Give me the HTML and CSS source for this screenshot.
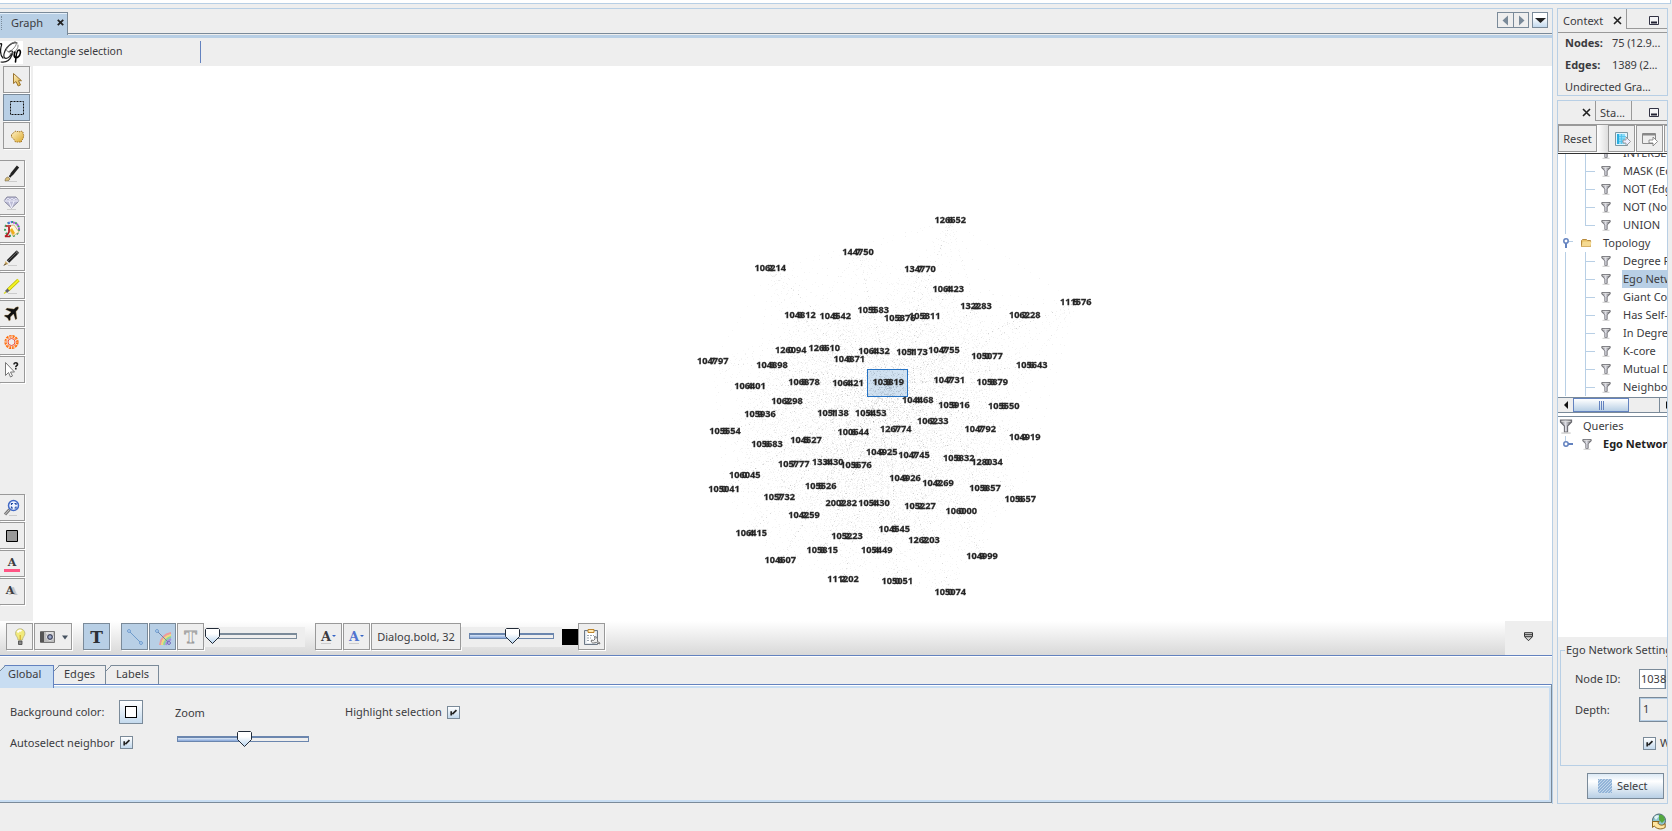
FILE: index.html
```
<!DOCTYPE html>
<html lang="en">
<head>
<meta charset="utf-8">
<title>Graph</title>
<link rel="stylesheet" href="styles.css">
</head>
<body>
<svg class="defs" width="0" height="0">
  <defs>
    <linearGradient id="metal" x1="0" y1="0" x2="0" y2="1"><stop offset="0" stop-color="#fff"/><stop offset=".35" stop-color="#fff"/><stop offset="1" stop-color="#b8d4ee"/></linearGradient>
    <linearGradient id="gold" x1="0" y1="0" x2="1" y2="1"><stop offset="0" stop-color="#fff2c8"/><stop offset="1" stop-color="#dba92c"/></linearGradient>
    <linearGradient id="steel" x1="0" y1="0" x2="1" y2="0"><stop offset="0" stop-color="#666"/><stop offset=".45" stop-color="#e0e0e8"/><stop offset="1" stop-color="#555"/></linearGradient>
    <symbol id="thumb" viewBox="0 0 15 16"><path d="M1.5.5h12l1 1v7l-7 7-7-7v-7z" fill="url(#metal)" stroke="#222b38"/></symbol>
    <symbol id="funnel" viewBox="0 0 10 12"><path d="M.8 1.500h8.400v1.500L6.200 6v4.500H3.800V6L.8 3z" fill="url(#steel)" stroke="#6c6c72" stroke-width=".8"/><path d="M1.500 2.500h7" stroke="#ddd" stroke-width=".8"/><path d="M1.500 11.300h7" stroke="#ccc"/></symbol>
    <symbol id="check" viewBox="0 0 13 13"><path d="M3.800 5v5M5.200 8.500L10 3.700" stroke="#222" stroke-width="2" fill="none"/></symbol>
    <symbol id="cross" viewBox="0 0 9 9"><path d="M1 1l7 7M8 1L1 8" stroke="#222" stroke-width="1.600"/></symbol>
    <symbol id="min" viewBox="0 0 10 9"><path d="M.5.5h9v8h-9z" fill="#f4f4f6" stroke="#334"/><path d="M2 6.500h6" stroke="#223" stroke-width="2"/></symbol>
  </defs>
</svg>
<div class="top-strip"></div>
<div class="workspace">
  <main class="main">
    <header class="tabbar">
      <div class="doc-tab"><i class="grip"></i><span>Graph</span><svg width="7" height="7" viewBox="0 0 9 9"><path d="M1 1l7 7M8 1L1 8" stroke="#222" stroke-width="2.300"/></svg></div>
      <div class="nav">
        <b><svg width="15" height="15"><path d="M10 2.500v10l-5.500-5z" fill="#7a8a99"/></svg></b><b><svg width="15" height="15"><path d="M5 2.500v10l5.500-5z" fill="#7a8a99"/></svg></b><b class="drop"><svg width="15" height="15"><path d="M2 5h11l-5.500 5z" fill="#222"/></svg></b>
      </div>
    </header>
    <div class="options">
      <svg class="logo" width="23" height="23" viewBox="0 0 23 23" fill="none" stroke-linecap="round">
        <path d="M0 3c2-1 2 0 1 3-1 5 0 9 2 11" stroke="#111" stroke-width="1.200"/>
        <path d="M17 2C12 0 5 7 4 13c-1 6 4 6 8-1M9 11c3-2 5-1 3 3-2 5-5 8-11 7" stroke="#222" stroke-width="1.200"/>
        <path d="M15 1C9 2 5 8 7 10s7-2 9-6c1-3-1-4-3-2M18 4c1 3-3 8-8 9" stroke="#777" stroke-width=".9"/>
        <path d="M15 11c-2 5 0 7 3 5s3-7 1-7-3 4-3.500 12" stroke="#000" stroke-width="1.600"/>
      </svg>
      <span>Rectangle selection</span><i class="vrule"></i>
    </div>
    <div class="stage">
      <aside class="tools">
        <div class="group select">
          <b><svg width="20" height="20"><path d="M6.500 3.500v10l2.500-2 2.200 4.500 2.300-1-2-4.300h3z" fill="url(#gold)" stroke="#9a7430"/></svg></b>
          <b class="on"><svg width="20" height="20"><path d="M3.500 3.500h13v13h-13z" fill="none" stroke="#111" stroke-dasharray="2 1"/></svg></b>
          <b><svg width="20" height="20"><path d="M4.500 8.500L7 6.500 8 5l2 1 1-1 2 1 1-1 2 1v2l.8 1-.8 4-1.500 1.500V16H8.500L7 13.500 4.500 11z" fill="url(#gold)" stroke="#a6792d" stroke-dasharray="1.600 .8"/></svg></b>
        </div>
        <div class="group edit">
          <b><svg width="20" height="20"><path d="M4 17c0-3 2-4 3-4l2 2c-1 2-3 2-5 2z" fill="#d8bd78" stroke="#766642" stroke-width=".6"/><path d="M8.500 13L11 10" stroke="#222" stroke-width="2"/><path d="M10.500 10.500L17 2.500" stroke="#222" stroke-width="3"/><path d="M5 17.500h11" stroke="#ccc"/></svg></b>
          <b><svg width="20" height="20"><path d="M6 5h9l3 4-7.500 7L3 9z" fill="#bcbcd6" stroke="#8888a0"/><path d="M3 9h15M8 9l2.500 7L13 9" stroke="#f5f5ff" fill="none" stroke-width=".9"/><path d="M5 8l2-2 2 2 2-2 2 2 2-2 1.500 2" stroke="#f5f5ff" fill="none" stroke-width=".7"/><path d="M6 17.500h9" stroke="#ccc"/></svg></b>
          <b><svg width="20" height="20"><circle cx="11" cy="9" r="7" fill="none" stroke="#3da35d" stroke-width="2" stroke-dasharray="2 2"/><path d="M7 3.500a7 7 0 0 1 4-1.500" fill="none" stroke="#4a74dd" stroke-width="2" stroke-dasharray="2 1"/><path d="M12 2.500a7 7 0 0 1 6 8" fill="none" stroke="#b058e0" stroke-width="2" stroke-dasharray="2 2"/><path d="M7 6l6-1 5 7-6 4z" fill="#fff6d8" stroke="#c9a562" stroke-width=".7"/><path d="M11 8l3 5-2 2-3-5z" fill="#efae1a"/><path d="M5 6h5M8 7v5q-1 3-4 4.500h5" stroke="#b51b22" stroke-width="1.700" fill="none"/></svg></b>
          <b><svg width="20" height="20"><path d="M7 13.500L16 4.500" stroke="#222" stroke-width="3.600"/><path d="M15.500 5L17 3.500" stroke="#555" stroke-width="3.600"/><path d="M3 17.500l1.500-4.500 3 3z" fill="#d5b06a"/><path d="M3 17.500l2-2" stroke="#222"/><path d="M7 13l9-9" stroke="#777" stroke-width=".7"/><path d="M7 17.500h9" stroke="#ccc"/></svg></b>
          <b><svg width="20" height="20"><path d="M7 14L17.500 4" stroke="#b6b600" stroke-width="3.400"/><path d="M7 14L17.500 4" stroke="#f3f324" stroke-width="2"/><path d="M5 16l2.500-2.500" stroke="#64646d" stroke-width="3"/><path d="M3 17.500l2-1.500" stroke="#d8d820" stroke-width="1.500"/><path d="M7 17.500h9" stroke="#ccc"/></svg></b>
          <b><svg width="20" height="20"><path d="M17.500 3c-1.500-.7-3 .3-4.500 2L6 4 4.500 5.500 10 8l-3 3H4l-1 1 3.500 2L8 17l1.500-1V13l3-3 2 6 1.500-1.500-1-7C17 6 18 4 17.500 3z" fill="#111" stroke="#d9b779" stroke-width=".4"/></svg></b>
          <b><svg width="20" height="20" fill="none" stroke="#ff6c0c"><circle cx="10.500" cy="10" r="5.800" stroke-width="2.600" stroke-dasharray="2.300 .75"/><circle cx="10.500" cy="10" r="3.500" stroke="#f13f24" stroke-width=".9"/><circle cx="10.500" cy="10" r="5.500" stroke="#ffe2c8" stroke-width=".9" stroke-dasharray="1 1"/></svg></b>
          <b><svg width="20" height="20"><path d="M4.500 2.500v13l3-3 2 4.500 2-1-2-4h4z" fill="#fff" stroke="#777"/><path d="M13 4.500c0-2.500 4-2 3.500 0-.3 1.500-1.700 1-1.700 2.800M14.800 8v1.500" stroke="#222" stroke-width="1.600" fill="none"/></svg></b>
        </div>
        <div class="group view">
          <b><svg width="20" height="20"><path d="M8.500 11.500l-4.500 5" stroke="#777" stroke-width="3"/><path d="M8.500 11.500l-4.500 5" stroke="#ccc" stroke-width="1"/><circle cx="12.500" cy="7.500" r="5" fill="#edf3ff" stroke="#4169c5" stroke-width="1.500"/><path d="M10.500 7V5.500H12M13.500 5.500H15V7M15 8.500V10h-1.500M12 10h-1.500V8.500" fill="none" stroke="#1f49a4" stroke-width="1.200"/><path d="M8 17.500h8" stroke="#ccc"/></svg></b>
          <b><svg width="20" height="20"><path d="M5.500 4.500h11v11h-11z" fill="#999" stroke="#000"/></svg></b>
          <b class="letter"><span>A</span><i class="pink"></i></b>
          <b class="letter shade"><span>A</span></b>
        </div>
      </aside>
      <div class="graph" id="graph"><canvas id="edges" width="1519" height="555"></canvas></div>
    </div>
    <div class="bottom-tools">
      <div class="btn w27"><svg width="20" height="20"><path d="M8 13c0-3-2.500-4-2.500-6.500a4.700 4.700 0 0 1 9.400 0C15 9 12.500 10 12.500 13z" fill="#f1ea7c" stroke="#b5b17b" stroke-width=".8"/><path d="M7.500 5.500q1.500-3 4-1.500" stroke="#fff" stroke-width="2" fill="none"/><path d="M8.500 14h3.500v3.500H8.500z" fill="#888" stroke="#444" stroke-width=".8"/><path d="M10.200 13V8" stroke="#d1a61c"/></svg></div>
      <div class="btn w38"><svg width="30" height="20"><path d="M2.500 4.500h14v11h-14z" fill="#bbb" stroke="#777"/><path d="M2 5h4v10H2z" fill="#555"/><path d="M8 5h7v2H8z" fill="#ddd"/><circle cx="12" cy="10" r="3.500" fill="#3e4259" stroke="#eee"/><circle cx="12" cy="10" r="1.700" fill="#9aa8cb"/><path d="M24 8.500h6l-3 4z" fill="#465260"/></svg></div>
      <div class="btn w27 on bold-t"><span>T</span></div>
      <div class="btn w27 on"><svg width="20" height="20"><path d="M4 4l12 12" stroke="#6d9bcb"/><circle cx="4" cy="4" r="1.400" fill="#cde3fa" stroke="#6796cb"/><circle cx="16" cy="16" r="1.400" fill="#cde3fa" stroke="#6796cb"/></svg></div>
      <div class="btn w27 on adj"><svg width="20" height="20"><g fill="none" stroke-width="2"><path d="M7 18Q8 8 18 6" stroke="#ee9a9a"/><path d="M9 18Q10 10 18 8" stroke="#f2dc78"/><path d="M11 18Q12 12 18 10" stroke="#8fd49c"/><path d="M13 18Q14 14 18 12" stroke="#a48de0"/></g><path d="M4 4l12 12" stroke="#6d86b0"/><circle cx="4" cy="4" r="1.400" fill="#cde3fa" stroke="#6796cb"/><circle cx="16" cy="16" r="1.400" fill="#cde3fa" stroke="#6a60b5"/></svg></div>
      <div class="btn w27 adj hollow-t"><span>T</span></div>
      <div class="slider first"><i class="track"></i><svg class="thumb" width="15" height="16"><use href="#thumb"/></svg></div>
      <div class="btn w27 far font-a"><span>A</span><i></i></div>
      <div class="btn w27 adj font-a blue"><span>A</span><i></i></div>
      <div class="btn w90 adj">Dialog.bold, 32</div>
      <div class="slider second"><i class="track half"></i><svg class="thumb" width="15" height="16"><use href="#thumb"/></svg></div>
      <i class="black"></i>
      <div class="btn w27 clip"><svg width="20" height="20"><path d="M2.500 3.500h13v14h-13z" fill="#dfe5ec" stroke="#6b7785"/><path d="M4.500 5h9v11h-9z" fill="#fff"/><path d="M6 2.500h6v3H6z" fill="#ffe9b5" stroke="#bd852b"/><path d="M5 8.500h7M5 11h4M5 13.500h3" stroke="#99a4af" stroke-dasharray="2 1"/><path d="M17.500 17l-3-1.500-3 .5a2 2 0 0 1-2-3l2 .5 1.500-1.500-.5-2.500q3 0 3 3v2l2.500 1.500z" fill="#eee" stroke="#666" stroke-width=".9"/></svg></div>
      <div class="expand"><svg width="10" height="10"><path d="M.5.700h8v4l-4 4-4-4z" fill="#d4d4d4" stroke="#333"/><path d="M1 2.700h7M1 4.700h7" stroke="#333"/></svg></div>
    </div>
    <section class="settings">
      <nav class="tabs"><span class="active">Global</span><span class="edges">Edges</span><span class="labels">Labels</span></nav>
      <div class="pane">
        <div class="col one">
          <div class="line bg"><span>Background color:</span><b class="swatch"><i></i></b></div>
          <div class="line"><span>Autoselect neighbor</span><svg class="cb" width="13" height="13"><use href="#check"/></svg></div>
        </div>
        <div class="col two"><span>Zoom</span><div class="slider zoom"><i class="track half"></i><svg class="thumb" width="15" height="16"><use href="#thumb"/></svg></div></div>
        <div class="col three"><span>Highlight selection</span><svg class="cb" width="13" height="13"><use href="#check"/></svg></div>
      </div>
    </section>
  </main>
  <aside class="right">
    <section class="panel context">
      <div class="ptabs"><div class="ptab ctx"><span>Context</span><svg width="9" height="9"><use href="#cross"/></svg></div><div class="prest"><svg width="10" height="9"><use href="#min"/></svg></div></div>
      <dl><dt>Nodes:</dt><dd>75 (12.9...</dd><dt>Edges:</dt><dd>1389 (2...</dd></dl>
      <p>Undirected Gra...</p>
    </section>
    <section class="panel filters">
      <div class="ptabs"><div class="ptab fx"><svg width="9" height="9"><use href="#cross"/></svg></div><div class="ptab sta">Sta...</div><div class="prest"><svg width="10" height="9"><use href="#min"/></svg></div></div>
      <div class="ftools"><div class="btn reset">Reset</div><i class="sep"></i>
        <div class="btn f1"><svg width="18" height="18"><path d="M2.500 2.500h12v13h-12z" fill="#dff5ff" stroke="#7d98a3"/><path d="M4 4h2v10H4z" fill="#2aaee0"/><path d="M6 4h6v10H6z" fill="#8adcf8"/><path d="M6 6.500h7M6 9h6M6 11.500h4M8.500 4v10" stroke="#4fc0ec" stroke-width=".8"/><path d="M10 10h3V7l4.500 4.500L13 16v-3h-3z" fill="#eef" stroke="#888" stroke-width=".8"/></svg></div>
        <div class="btn f2"><svg width="18" height="18"><path d="M1.500 3.500h13v10h-13z" fill="#eee" stroke="#888"/><path d="M2 4.500h12" stroke="#888" stroke-width="2"/><path d="M8 10h4V7l4.500 4.500L12 16v-3H8z" fill="#fff" stroke="#777" stroke-width=".8"/></svg></div><div class="btn f3"></div></div>
      <div class="tree"><ul id="tree">
        <li class="leaf"><svg><use href="#funnel"/></svg>INTERSECTION</li>
        <li class="leaf"><svg><use href="#funnel"/></svg>MASK (Edges)</li>
        <li class="leaf"><svg><use href="#funnel"/></svg>NOT (Edges)</li>
        <li class="leaf"><svg><use href="#funnel"/></svg>NOT (Nodes)</li>
        <li class="leaf last"><svg><use href="#funnel"/></svg>UNION</li>
        <li class="folder"><svg class="handle" viewBox="0 0 10 12"><circle cx="3" cy="4" r="2.200" fill="#fff" stroke="#6382bf" stroke-width="1.500"/><path d="M3 6v5" stroke="#6382bf" stroke-width="2"/><path d="M6 4.500h4" stroke="#b8cfe5"/></svg><svg class="fold" viewBox="0 0 11 10"><path d="M.5 2.500l1-1h4l1 1h3v6h-9z" fill="#e8c267" stroke="#b6893c"/><path d="M1.500 4.500l1-1h8l-1 5h-9z" fill="#f5da92"/></svg>Topology</li>
        <li class="leaf"><svg><use href="#funnel"/></svg>Degree Range</li>
        <li class="leaf"><svg><use href="#funnel"/></svg><span class="hl">Ego Network</span></li>
        <li class="leaf"><svg><use href="#funnel"/></svg>Giant Component</li>
        <li class="leaf"><svg><use href="#funnel"/></svg>Has Self-loop</li>
        <li class="leaf"><svg><use href="#funnel"/></svg>In Degree Range</li>
        <li class="leaf"><svg><use href="#funnel"/></svg>K-core</li>
        <li class="leaf"><svg><use href="#funnel"/></svg>Mutual Degree</li>
        <li class="leaf"><svg><use href="#funnel"/></svg>Neighbors</li>
      </ul></div>
      <div class="scroll"><b><svg width="14" height="14"><path d="M10 3v8L6 7z" fill="#111"/></svg></b><i class="bar"><em></em><em></em><em></em></i><i class="rest"></i><b class="end"><svg width="7" height="14"><path d="M6 3v8l4-4z" fill="#111"/></svg></b></div>
      <div class="queries">
        <div class="q1"><svg width="14" height="16"><use href="#funnel"/></svg><span>Queries</span></div>
        <div class="q2"><svg class="h2" width="11" height="16" viewBox="0 0 11 16"><path d="M2.500 0v5" stroke="#b8cfe5"/><circle cx="3" cy="8" r="2.200" fill="#fff" stroke="#6382bf" stroke-width="1.500"/><path d="M5 8h5" stroke="#6382bf" stroke-width="2"/></svg><svg width="10" height="12"><use href="#funnel"/></svg><strong>Ego Network</strong></div>
      </div>
      <div class="ego">
        <fieldset><legend>Ego Network Settings</legend>
          <div class="field"><label>Node ID:</label><span class="input">1038</span></div>
          <div class="field depth"><label>Depth:</label><span class="spin">1</span></div>
          <div class="with"><svg class="cb" width="13" height="13"><use href="#check"/></svg><span>With self</span></div>
        </fieldset>
        <div class="sel"><i></i><span>Select</span></div>
      </div>
    </section>
  </aside>
</div>
<footer class="status"><svg width="16" height="17" viewBox="0 0 16 17"><circle cx="8" cy="7.500" r="6.500" fill="#8fc3cf" stroke="#47636c"/><path d="M8 2q5-1 6 5l-3 3-3-3z" fill="#55a83e"/><path d="M3 4q3-3 5-1L5 7z" fill="#e3f3f3"/><path d="M1.500 8.500v6l1.700-1.500c2.500 3 7 4 11 1.500v-4c-2.500 2.500-5.500 2-7.500-.5l1.500-1.500z" fill="#ffe5a0" stroke="#8b641d"/></svg></footer>
<script src="graph.js"></script>
</body>
</html>
```
FILE: styles.css
```
* { box-sizing: border-box; }
body { margin: 0; width: 1672px; height: 831px; overflow: hidden; background: #eee; color: #3b3b40; font: 11px/16px "Noto Sans", sans-serif; display: flex; flex-direction: column; white-space: nowrap; }
svg { display: block; flex: none; }
b, i { font-style: normal; flex: none; }
.defs { position: absolute; }
.top-strip { height: 4px; flex: none; width: 1671px; background: #fff; border-bottom: 1px solid #b8cfe5; border-right: 1px solid #b8cfe5; }
.workspace { display: flex; height: 800px; padding-top: 4px; gap: 4px; flex: none; }
.main { width: 1553px; height: 796px; flex: none; display: flex; flex-direction: column; border-top: 1px solid #b8cfe5; border-right: 1px solid #b8cfe5; }
.tabbar { height: 29px; flex: none; display: flex; justify-content: space-between; align-items: flex-start; border-bottom: 3px solid #b8cfe5; padding-top: 3px; background: linear-gradient(#7a8a99,#7a8a99) 0 24px/100% 1px no-repeat; }
.doc-tab { width: 68px; height: 23px; display: flex; align-items: center; background: #b8cfe5; border-top: 1px solid #7a8a99; border-right: 1px solid #7a8a99; box-shadow: inset 0 1px #e5eff9; padding-bottom: 3px; }
.grip { width: 2px; height: 14px; border-right: 1px dotted #7a8a99; margin-right: 9px; }
.doc-tab span { width: 46px; }
.nav { display: flex; padding-right: 4px; }
.nav b { width: 16px; height: 16px; border: 1px solid #7a8a99; border-right: 0; }
.nav b:nth-child(2) { border-right: 1px solid #7a8a99; }
.nav .drop { margin-left: 3px; border: 1px solid #7a8a99; background: linear-gradient(#fff 30%,#c4daee); }
.options { height: 28px; flex: none; display: flex; align-items: center; font-size: 10.500px; }
.options span { margin: 0 0 2px 4px; width: 173px; }
.logo { background: #fff; }
.vrule { width: 1px; height: 22px; background: #6382bf; }
.stage { height: 555px; flex: none; display: flex; }
.tools { width: 33px; flex: none; background: #eee; }
.group { display: flex; flex-direction: column; gap: 1px; }
.group.select { padding-left: 3px; }
.group.edit { margin-top: 11px; }
.group.view { margin-top: 111px; }
.group b { width: 25px; height: 27px; border: 1px solid #999; border-left: 0; box-shadow: 1px 1px #fff; padding: 3px 0 0 1px; background: #eee; }
.group.select b { width: 27px; border-left: 1px solid #999; padding-left: 3px; }
.group b.on, .btn.on { background: #b8cfe5; border-color: #7a8a99; }
.group .letter { font: bold 11px/18px "DejaVu Serif", serif; padding-left: 4px; }
.letter span { display: block; width: 16px; text-align: center; height: 15px; }
.pink { display: block; height: 3px; width: 16px; background: #ff5585; }
.group .shade { text-shadow: 3px 1px #c4c4c4; padding-left: 2px; }
.graph { position: relative; flex: 1; background: #fff; overflow: hidden; }
#edges { display: block; }
.node { position: absolute; font: bold 9.200px/12px "Noto Sans", sans-serif; color: #222; -webkit-text-stroke: .3px #333; transform: translate(-50%,-50%); }
.node::after { content: attr(data-mid); position: absolute; left: 0; right: 0; text-align: center; }
.marquee { position: absolute; left: 834px; top: 303px; width: 41px; height: 28px; border: 1px solid #2673c4; background: rgba(90,150,210,.28); }
.bottom-tools { height: 34px; flex: none; display: flex; align-items: flex-start; padding: 2px 0 0 6px; background: linear-gradient(#fff,#d8d8d8); }
.btn { height: 27px; flex: none; border: 1px solid #999; box-shadow: 1px 1px #fff; background: #eee; display: flex; align-items: center; justify-content: center; }
.w27 { width: 27px; } .w38 { width: 38px; margin: 0 11px 0 1px; } .w90 { width: 90px; }
.bold-t { margin-right: 11px; }
.adj { margin-left: 1px; }
.bold-t span { font: bold 17px/20px "DejaVu Serif", serif; color: #2c3036; }
.hollow-t span { font: bold 17px/20px "DejaVu Serif", serif; color: #f4f4f4; -webkit-text-stroke: .8px #999; }
.far { margin-left: 10px; }
.font-a { font: bold 13px/20px "DejaVu Serif", serif; gap: 1px; }
.font-a i { border: 2px solid transparent; border-top: 2px solid #3464c5; height: 3px; border-bottom: 0; }
.font-a span { background: linear-gradient(#ccc,#ccc) 0 85%/100% 1px no-repeat; }
.font-a.blue { color: #5274cf; }
.slider { position: relative; height: 20px; flex: none; background: #eee; }
.slider .track { position: absolute; height: 6px; border: 1px solid #7a8a99; border-top-width: 2px; }
.slider .track.half { background: linear-gradient(#dbe8f8,#86a6d9) 0/52% 100% no-repeat; border-color: #6b86ae; }
.slider .thumb { position: absolute; }
.first, .second { width: 101px; margin-top: 4px; }
.first .track { left: 3px; width: 90px; top: 6px; }
.first .thumb { left: 1px; top: 1px; }
.second .track { left: 8px; width: 85px; top: 6px; }
.second .thumb { left: 44px; top: 1px; }
.black { width: 16px; height: 16px; background: #000; margin-top: 6px; }
.expand { margin: -2px 0 0 auto; width: 47px; height: 34px; background: #eee; padding: 11px 0 0 19px; }
.settings { border-top: 1px solid #6382bf; flex: 1; box-shadow: inset 0 1px #fff; padding-top: 9px; display: flex; flex-direction: column; }
.tabs { display: flex; height: 19px; }
.tabs span { height: 19px; border-top: 1px solid #7a8a99; border-right: 1px solid #7a8a99; line-height: 15px; clip-path: polygon(5px 0,100% 0,100% 100%,0 100%,0 5px); background: linear-gradient(135deg,transparent 3px,#7a8a99 3px,#7a8a99 4px,transparent 4px); }
.tabs .active { width: 54px; height: 23px; padding-left: 8px; background-color: #c8ddf2; border-color: #6382bf; }
.tabs .edges { width: 52px; padding-left: 10px; }
.tabs .labels { width: 53px; padding-left: 10px; }
.pane { flex: 1; display: flex; border-top: 1px solid #6382bf; border-right: 1px solid #7a8a99; border-bottom: 1px solid #7a8a99; box-shadow: inset 0 1px #fff, inset -2px -2px #c8ddf2, inset 0 3px #c8ddf2; margin-bottom: 1px; }
.col.one { width: 175px; padding: 14px 0 0 10px; }
.line { display: flex; align-items: center; height: 25px; }
.line.bg { margin-bottom: 6px; }
.line.bg span { width: 109px; }
.line:last-child span { width: 110px; }
.swatch { width: 24px; height: 24px; border: 1px solid #7a8a99; background: linear-gradient(#fff,#c4daee); padding: 5px; }
.swatch i { display: block; width: 12px; height: 12px; border: 1px solid #000; background: #fff; }
.cb { border: 1px solid #7a8a99; background: linear-gradient(#fff,#c2d8ec); }
.col.two { width: 170px; padding-top: 20px; }
.zoom .track { left: 2px; width: 132px; top: 15px; }
.zoom .thumb { left: 62px; top: 10px; }
.col.three { display: flex; gap: 5px; padding-top: 19px; }
.col.three .cb { margin-top: 2px; }
.right { width: 111px; }
.panel { border: 1px solid #b8cfe5; width: 111px; overflow: hidden; }
.context { height: 88px; margin-bottom: 4px; }
.ptabs { display: flex; height: 24px; border-bottom: 1px solid #999; }
.ptab { border-right: 1px solid #999; display: flex; align-items: center; padding-top: 1px; }
.ctx { width: 69px; padding-left: 5px; height: 20px; gap: 9px; padding-top: 3px; }
.ctx span { width: 41px; }
.prest { flex: 1; border-bottom: 1px solid #999; height: 20px; padding: 7px 0 0 22px; }
dl { margin: 1px 0 0; display: grid; grid-template-columns: 47px 1fr; grid-auto-rows: 22px; line-height: 18px; padding-left: 7px; }
dt { font-weight: bold; } dd { margin: 0; }
dd, .context p { letter-spacing: -.1px; }
.context p { margin: 0 0 0 7px; line-height: 18px; }
.filters { height: 704px; }
.fx { width: 38px; padding-left: 24px; height: 20px; padding-top: 3px; }
.sta { width: 36px; padding-left: 4px; height: 20px; padding-top: 4px; border-bottom: 1px solid #999; }
.filters .prest { padding: 7px 0 0 17px; }
.ftools { display: flex; height: 29px; border-bottom: 1px solid #333; }
.reset { width: 39px; } .sep { width: 11px; background: linear-gradient(90deg,#fff,#ddd); }
.f1 { width: 27px; } .f2 { width: 27px; margin-left: 1px; } .f3 { width: 27px; margin-left: 1px; }
.tree { height: 243px; background: #fff; overflow: hidden; }
.tree ul { list-style: none; margin: -10px 0 0; padding: 0 0 0 7px; }
.tree li { height: 18px; line-height: 18px; display: flex; align-items: center; border-left: 1px solid #b8cfe5; }
.leaf { background: linear-gradient(#b8cfe5,#b8cfe5) 19px 0/1px 100% no-repeat, linear-gradient(#b8cfe5,#b8cfe5) 19px 9px/10px 1px no-repeat; padding-left: 35px; }
.leaf.last { background-size: 1px 9px, 10px 1px; }
.leaf svg { width: 10px; height: 12px; margin-right: 12px; }
.hl { background: #b8cfe5; margin-left: -1px; padding-left: 1px; height: 18px; width: 60px; }
.tree .folder { border-left-color: transparent; }
.handle { width: 10px; height: 12px; margin-left: -3px; }
.fold { width: 11px; height: 10px; margin: 0 11px 0 8px; }
.scroll { height: 16px; display: flex; border: 1px solid #7a8a99; border-width: 1px 0; background: #eee; }
.scroll b { width: 15px; }
.bar { width: 56px; border: 1px solid #6382bf; background: linear-gradient(#fff,#b8cfe5); display: flex; gap: 1px; padding: 2px 0 2px 25px; }
.bar em { width: 1px; height: 9px; background: #6382bf; }
.rest { width: 31px; border-right: 1px solid #7a8a99; }
.scroll .end { width: 7px; }
.queries { height: 224px; background: linear-gradient(#7a8a99,#7a8a99) 0 3px/100% 1px no-repeat #fff; padding-top: 4px; }
.q1, .q2 { height: 18px; display: flex; align-items: center; }
.q1 { padding-left: 1px; gap: 10px; } .q2 { padding-left: 5px; color: #222; }
.h2 { margin-right: 8px; } .q2 strong { margin-left: 11px; }
.ego { padding: 5px 0 0 2px; }
fieldset { margin: 0; padding: 6px 0 0 14px; height: 124px; width: 150px; min-width: 0; border: 1px solid #b8cfe5; }
legend { padding: 0 1px; margin-left: -10px; }
.field { display: flex; align-items: center; margin-top: 5px; }
.field label { width: 64px; flex: none; }
.input { width: 27px; height: 20px; border: 1px solid #7a8a99; background: #fff; padding: 1px; box-shadow: inset -1px 0 #b8cfe5; }
.depth { margin-top: 8px; }
.spin { width: 60px; height: 25px; border: 1px solid #7a8a99; box-shadow: inset 1px 1px #b8cfe5, inset 0 -1px #b8cfe5; padding: 3px; }
.with { display: flex; gap: 4px; align-items: center; margin: 13px 0 0 68px; }
.sel { width: 77px; height: 26px; margin: 7px 0 0 27px; border: 1px solid #7a8a99; background: linear-gradient(#dce9f5,#fff 30%,#b8cfe5); display: flex; align-items: center; padding-left: 10px; gap: 5px; }
.sel i { width: 14px; height: 14px; background: repeating-linear-gradient(135deg,#93b4d8 0 1px,#c3d7eb 1px 2.100px); }
.status { flex: 1; padding: 9px 0 0 1651px; }
```
FILE: graph.js
```
// Node label, x, y; coordinates are in thirds of a pixel from the view origin.
const upper = `126652 812 62|144750 535 156|106214 272 204|134770 721 207|106423 806 269|111576 1188 306|132283 889 319|106228 1035 346|105583 581 331|105376 660 356|105311 735 350|104812 361 346|104542 467 348|126094 333 451|126610 434 446|106432 583 455|105173 697 458|104755 793 451|105077 922 468|104871 509 478|104797 99 483|104898 277 497|105643 1056 495|104731 809 540|105879 938 546|103819 626 548|106421 505 550|106878 373 548|106401 211 558|106298 322 604|104468 714 601|105916 823 615|105550 972 620|105936 241 642|105138 460 640|105453 573 640`;
const lower = `106233 759 65|126774 648 88|100644 521 97|104792 902 89|104919 1035 111|105554 136 94|105683 262 132|104527 379 121|104925 606 156|104745 703 166|105832 837 174|128034 922 188|105777 342 194|133430 444 187|105676 529 197|106045 195 226|105041 133 268|104926 676 236|104269 775 250|105526 423 259|105857 916 266|105657 1022 299|105732 299 292|200282 485 311|105430 583 309|105227 721 318|106000 845 334|104259 373 347|104545 644 388|106415 215 399|105223 502 408|126203 733 422|105815 428 450|105449 591 450|104607 302 481|104999 907 470|111202 490 538|105051 653 545|105074 812 577`;
const parse = (rows, top) => rows.split('|').map(r => {
  const [label, x, y] = r.split(' ');
  return { label, x: 646.7 + x / 3, y: top + y / 3 };
});
const nodes = [...parse(upper, 133.7), ...parse(lower, 333.7)];
const view = document.getElementById('graph');
const ctx = document.getElementById('edges').getContext('2d');
let seed = 17;
const rnd = () => (seed = (seed * 16807) % 2147483647) / 2147483647;
const ego = nodes.find(n => n.label === '103819');

function edge(a, b, step, alpha) {
  const length = Math.hypot(a.x - b.x, a.y - b.y);
  for (let d = rnd() * step; d < length; d += step * (0.5 + rnd())) {
    const t = d / length;
    ctx.fillStyle = `rgba(60,60,60,${alpha * (0.4 + rnd())})`;
    ctx.fillRect(Math.round(a.x + (b.x - a.x) * t), Math.round(a.y + (b.y - a.y) * t), 1, 1);
  }
}
nodes.forEach((a, i) => {
  if (a !== ego) edge(ego, a, 6, 0.17);
  nodes.slice(i + 1).forEach(b => {
    const distance = Math.hypot(a.x - b.x, a.y - b.y);
    if (rnd() < (distance < 220 ? 0.55 : 0.1)) edge(a, b, 9, 0.055);
  });
});
const marquee = document.createElement('div');
marquee.className = 'marquee';
view.append(marquee);
for (const n of nodes) {
  const el = document.createElement('span');
  el.className = 'node';
  el.style.left = n.x + 'px';
  el.style.top = n.y + 'px';
  el.dataset.mid = n.label[3];
  el.textContent = n.label;
  view.append(el);
}
```
